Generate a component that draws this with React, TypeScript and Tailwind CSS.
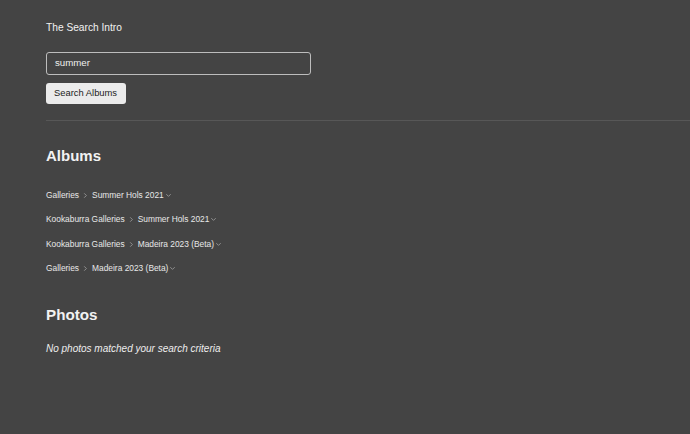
import React from 'react';

const albums = [
  ['Galleries', 'Summer Hols 2021'],
  ['Kookaburra Galleries', 'Summer Hols 2021'],
  ['Kookaburra Galleries', 'Madeira 2023 (Beta)'],
  ['Galleries', 'Madeira 2023 (Beta)'],
];

const Chevron = ({ down }: { down?: boolean }) => (
  <svg width="7" height="7" viewBox="0 0 8 8" fill="none" stroke="#9a9a9a" strokeWidth="1" className="shrink-0">
    {down ? <path d="M1.5 2.5 L4 5 L6.5 2.5" /> : <path d="M2.5 1.5 L5 4 L2.5 6.5" />}
  </svg>
);

export default function App() {
  return (
    <div className="min-h-[434px] w-full bg-[#444444] text-[#f2f2f2] font-['Liberation_Sans',Arial,sans-serif] pl-[46px] pt-[20px]">
      <p className="text-[10.2px] leading-[15px]">The Search Intro</p>

      <div className="mt-[17px] w-[265px] h-[23px] rounded-[3px] border border-[#bdbdbd] px-[8px] flex items-center text-[9.7px] text-[#eeeeee]">
        summer
      </div>
      <button className="mt-[8px] h-[21px] w-[80px] rounded-[3px] bg-[#ebebeb] text-[#222] text-[9.4px] pl-[8px] flex items-center">
        Search Albums
      </button>

      <div className="mt-[16px] h-px bg-[#575757]" />

      <h2 className="mt-[25px] text-[15px] font-bold leading-[20px]">Albums</h2>

      <div className="mt-[23px] flex flex-col gap-[11.3px]">
        {albums.map(([a, b], i) => (
          <div key={i} className="flex items-center h-[13px] text-[8.4px] text-[#e8e8e8]">
            <span>{a}</span>
            <span className="mx-[3px] flex items-center"><Chevron /></span>
            <span>{b}</span>
            <span className="ml-[1px] flex items-center"><Chevron down /></span>
          </div>
        ))}
      </div>

      <h2 className="mt-[30px] text-[15.2px] font-bold leading-[20px]">Photos</h2>
      <p className="mt-[16px] text-[10px] italic text-[#eeeeee]">No photos matched your search criteria</p>
    </div>
  );
}
